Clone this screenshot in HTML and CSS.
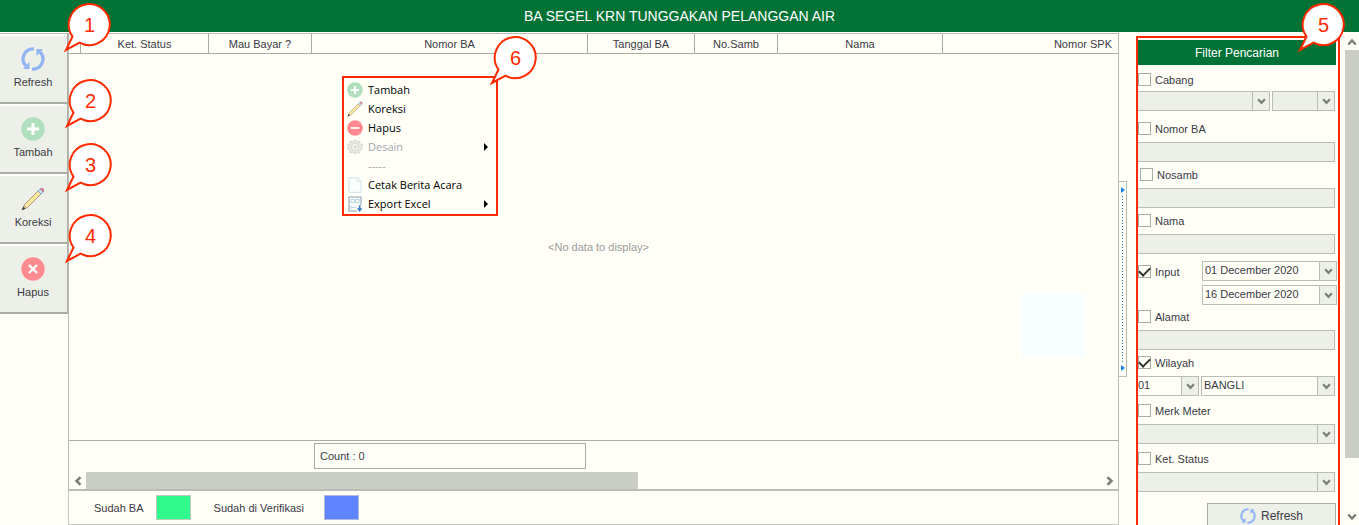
FILE: index.html
```html
<!DOCTYPE html>
<html lang="id">
<head>
<meta charset="utf-8">
<title>BA Segel KRN Tunggakan Pelanggan Air</title>
<link rel="stylesheet" href="styles.css">
</head>
<body>
<svg class="defs" aria-hidden="true">
  <symbol id="i-refresh" viewBox="0 0 24 24">
    <g fill="none" stroke="#93b4f3" stroke-width="3.2">
      <path d="M13 2A10 10 0 0 0 5 19"/>
      <path d="M11 22A10 10 0 0 0 19 5"/>
    </g>
    <path d="M2 22h6.500v-7z M22 2h-6.500v7z" fill="#93b4f3"/>
  </symbol>
  <symbol id="i-plus" viewBox="0 0 24 24">
    <circle cx="12" cy="12" r="11.700" fill="#afdfbd"/>
    <path d="M12 6v12M6 12h12" stroke="#fff" stroke-width="3"/>
  </symbol>
  <symbol id="i-minus" viewBox="0 0 24 24">
    <circle cx="12" cy="12" r="11.700" fill="#ff8a90"/>
    <path d="M5.500 12h13" stroke="#fff" stroke-width="2.600"/>
  </symbol>
  <symbol id="i-cross" viewBox="0 0 24 24">
    <circle cx="12" cy="12" r="11.700" fill="#ff8a90"/>
    <path d="M8 8l8 8M16 8l-8 8" stroke="#fff" stroke-width="2.400"/>
  </symbol>
  <symbol id="i-pencil" viewBox="0 0 24 24">
    <path d="M1 23l2.200-5L17 4l3 3L6 20.800z" fill="#ffe9a0" stroke="#8d8565" stroke-width=".8"/>
    <path d="M1 23l2.200-5L6 20.800z" fill="#d9b98a"/>
    <path d="M1 23l1.200-3.300 2.200 2.100z" fill="#333"/>
    <path d="M17 4l2.200-2.200 3 3L20 7z" fill="#cfe6f5" stroke="#7f9db5" stroke-width=".8"/>
    <path d="M19.200 1.800Q20.500.6 22.200 1.800q1.400 1.700.2 3.100z" fill="#e8798c" stroke="#a86a78" stroke-width=".6"/>
  </symbol>
  <symbol id="i-gear" viewBox="0 0 24 24">
    <path d="M12 1l2.500 3.500L19 3l.5 4.500L23.500 9l-2 3 2 3-4 1.500L19 21l-4.500-1.500L12 23l-2.500-3.500L5 21l-.5-4.500L.5 15l2-3-2-3 4-1.500L5 3l4.500 1.500z" fill="#e9ebe5" stroke="#cdd0c8" stroke-width="1.200"/>
    <circle cx="12" cy="12" r="5.500" fill="#f7f8f2" stroke="#cbcec6" stroke-width="1.200"/>
    <circle cx="12" cy="12" r="2.500" fill="#d9dbd4"/>
  </symbol>
  <symbol id="i-page" viewBox="0 0 24 24">
    <path d="M3 1h12.500L21 6.500V23H3z" fill="#fbfffc" stroke="#cfe2ea" stroke-width="1.500"/>
    <path d="M15.500 1v5.500H21" fill="none" stroke="#cfe2ea" stroke-width="1.500"/>
  </symbol>
  <symbol id="i-export" viewBox="0 0 24 24">
    <path d="M15 22.500H3V1.500h18V14" fill="none" stroke="#8aa0b4" stroke-width="1.600"/>
    <path d="M6 5h5v5H6zM13 5h5v5h-5zM6 17h8M6 14v6" fill="none" stroke="#b7d3df" stroke-width="1.500"/>
    <path d="M19 14v6" stroke="#3c78c8" stroke-width="2.600"/>
    <path d="M14.800 18.500h8.400L19 24z" fill="#3c78c8"/>
  </symbol>
  <symbol id="i-down" viewBox="0 0 8 8">
    <path d="M1 2l3 3.200L7 2" fill="none" stroke="#7b7f75" stroke-width="2"/>
  </symbol>
  <symbol id="i-callout" viewBox="0 0 50 50">
    <path d="M2 47L8.500 33.500A20.500 20.500 0 1 1 15.500 39.700z" fill="#fff" stroke="#ff2a00" stroke-width="2"/>
  </symbol>
</svg>

<div class="app">
  <header class="title-bar"><h1>BA SEGEL KRN TUNGGAKAN PELANGGAN AIR</h1></header>

  <div class="workspace">
    <nav class="toolbar" aria-label="Aksi">
      <button type="button"><svg><use href="#i-refresh"/></svg>Refresh</button>
      <button type="button"><svg><use href="#i-plus"/></svg>Tambah</button>
      <button type="button"><svg><use href="#i-pencil"/></svg>Koreksi</button>
      <button type="button"><svg><use href="#i-cross"/></svg>Hapus</button>
    </nav>

    <main class="content">
      <section class="grid">
        <table>
          <colgroup><col class="c-mark"><col class="c-status"><col class="c-bayar"><col class="c-nomor"><col class="c-tanggal"><col class="c-samb"><col class="c-nama"><col></colgroup>
          <thead>
            <tr><th></th><th>Ket. Status</th><th>Mau Bayar ?</th><th>Nomor BA</th><th>Tanggal BA</th><th>No.Samb</th><th>Nama</th><th class="last">Nomor SPK</th></tr>
          </thead>
        </table>
        <div class="grid-body"><p>&lt;No data to display&gt;</p></div>
        <div class="summary"><div class="count">Count : 0</div></div>
        <div class="scroll-x">
          <button type="button" class="sb left" aria-label="Geser kiri"><svg><use href="#i-down"/></svg></button>
          <div class="track"><div class="thumb"></div></div>
          <button type="button" class="sb right" aria-label="Geser kanan"><svg><use href="#i-down"/></svg></button>
        </div>
        <div class="ghost"></div>
      </section>
      <footer class="legend">
        <span>Sudah BA</span><i class="swatch green"></i>
        <span>Sudah di Verifikasi</span><i class="swatch blue"></i>
      </footer>
    </main>

    <div class="splitter"><i></i><b></b><i></i></div>

    <aside class="side">
      <form class="filter">
        <h2>Filter Pencarian</h2>

        <div class="field pair">
          <label class="check"><input type="checkbox">Cabang</label>
          <div class="row">
            <div class="combo grow off"><select aria-label="Kode cabang"><option></option></select><span><svg><use href="#i-down"/></svg></span></div>
            <div class="combo small off"><select aria-label="Nama cabang"><option></option></select><span><svg><use href="#i-down"/></svg></span></div>
          </div>
        </div>
        <div class="field roomy">
          <label class="check"><input type="checkbox">Nomor BA</label>
          <input type="text" class="text" aria-label="Nomor BA">
        </div>
        <div class="field">
          <label class="check inset"><input type="checkbox">Nosamb</label>
          <input type="text" class="text" aria-label="Nosamb">
        </div>
        <div class="field">
          <label class="check"><input type="checkbox">Nama</label>
          <input type="text" class="text" aria-label="Nama">
        </div>
        <div class="field dates">
          <label class="check"><input type="checkbox" checked>Input</label>
          <div class="date-list">
            <div class="combo"><select aria-label="Tanggal awal"><option>01 December 2020</option></select><span><svg><use href="#i-down"/></svg></span></div>
            <div class="combo"><select aria-label="Tanggal akhir"><option>16 December 2020</option></select><span><svg><use href="#i-down"/></svg></span></div>
          </div>
        </div>
        <div class="field tight">
          <label class="check"><input type="checkbox">Alamat</label>
          <input type="text" class="text" aria-label="Alamat">
        </div>
        <div class="field">
          <label class="check"><input type="checkbox" checked>Wilayah</label>
          <div class="row">
            <div class="combo code"><select aria-label="Kode wilayah"><option>01</option></select><span><svg><use href="#i-down"/></svg></span></div>
            <div class="combo grow"><select aria-label="Nama wilayah"><option>BANGLI</option></select><span><svg><use href="#i-down"/></svg></span></div>
          </div>
        </div>
        <div class="field roomy">
          <label class="check"><input type="checkbox">Merk Meter</label>
          <div class="combo off"><select aria-label="Merk Meter"><option></option></select><span><svg><use href="#i-down"/></svg></span></div>
        </div>
        <div class="field roomy">
          <label class="check"><input type="checkbox">Ket. Status</label>
          <div class="combo off"><select aria-label="Ket. Status"><option></option></select><span><svg><use href="#i-down"/></svg></span></div>
        </div>
        <button type="button" class="refresh"><svg><use href="#i-refresh"/></svg>Refresh</button>
      </form>
      <div class="scroll-y">
        <button type="button" class="sb up" aria-label="Gulir atas"><svg><use href="#i-down"/></svg></button>
        <div class="track"><div class="thumb"></div></div>
        <button type="button" class="sb down" aria-label="Gulir bawah"><svg><use href="#i-down"/></svg></button>
      </div>
    </aside>
  </div>

  <div class="menu" role="menu">
    <button type="button" role="menuitem"><svg><use href="#i-plus"/></svg>Tambah</button>
    <button type="button" role="menuitem"><svg><use href="#i-pencil"/></svg>Koreksi</button>
    <button type="button" role="menuitem"><svg><use href="#i-minus"/></svg>Hapus</button>
    <button type="button" role="menuitem" class="sub" disabled><svg><use href="#i-gear"/></svg>Desain</button>
    <button type="button" role="menuitem" disabled><svg></svg>-----</button>
    <button type="button" role="menuitem"><svg><use href="#i-page"/></svg>Cetak Berita Acara</button>
    <button type="button" role="menuitem" class="sub"><svg><use href="#i-export"/></svg>Export Excel</button>
  </div>

  <div class="callout n1"><svg><use href="#i-callout"/></svg><span>1</span></div>
  <div class="callout n2"><svg><use href="#i-callout"/></svg><span>2</span></div>
  <div class="callout n3"><svg><use href="#i-callout"/></svg><span>3</span></div>
  <div class="callout n4"><svg><use href="#i-callout"/></svg><span>4</span></div>
  <div class="callout n5"><svg><use href="#i-callout"/></svg><span>5</span></div>
  <div class="callout n6"><svg><use href="#i-callout"/></svg><span>6</span></div>
</div>
</body>
</html>
```
FILE: styles.css
```css
:root {
  --paper: #fffff8;
  --green: #007236;
  --panel: #edf0e8;
  --line: #aaaea2;
  --line-soft: #b9bdb3;
  --thumb: #cbcec5;
  --ink: #3a3a44;
  --red: #ff2a00;
}
* { box-sizing: border-box; }
body {
  margin: 0;
  background: var(--paper);
  color: var(--ink);
  font: 11px/14px "Liberation Sans", Arial, sans-serif;
}
button, input, select { font: inherit; color: inherit; margin: 0; border-radius: 0; }
h1, h2, p { margin: 0; font-weight: normal; }
.defs { position: absolute; width: 0; height: 0; }

.app { position: relative; display: flex; flex-direction: column; height: 100vh; overflow: hidden; }
.title-bar { flex: none; height: 32px; background: var(--green); color: #fff; text-align: center; }
.title-bar h1 { font-size: 14px; line-height: 32px; }
.workspace { flex: 1; display: flex; min-height: 0; padding-top: 1px; }

.toolbar { width: 68px; border-top: 1px solid var(--line-soft); }
.toolbar button {
  display: flex; flex-direction: column; align-items: center; justify-content: center; gap: 4px;
  width: 100%; height: 70px; padding: 0 1px 0 0;
  border: solid var(--line); border-width: 0 1px 2px 0;
  box-shadow: inset 0 2px #fff;
  background: var(--panel);
}
.toolbar svg { width: 24px; height: 24px; }

.content { flex: 1; min-width: 0; display: flex; flex-direction: column; }
.grid {
  position: relative; flex: 1; display: flex; flex-direction: column;
  border: 1px solid var(--line-soft); border-bottom-width: 2px;
}
table { width: 100%; table-layout: fixed; border-collapse: separate; border-spacing: 0; }
th {
  height: 20px; padding: 1px 0 0; font-weight: normal; text-align: center; line-height: 18px;
  border-right: 1px solid var(--line); border-bottom: 1px solid var(--line);
}
th.last { text-align: right; padding-right: 6px; border-right: 0; }
.c-mark { width: 12px; }
.c-status { width: 128px; }
.c-bayar { width: 103px; }
.c-nomor { width: 276px; }
.c-tanggal { width: 107px; }
.c-samb { width: 83px; }
.c-nama { width: 165px; }
.grid-body { flex: 1; display: grid; place-items: center; padding-left: 10px; color: #9a9a9a; }
.ghost { position: absolute; right: 32px; top: 260px; width: 64px; height: 64px; background: #f8ffff; }
.summary { height: 32px; padding: 2px 0 3px 245px; border-top: 1px solid var(--line); }
.count { width: 272px; height: 26px; padding-left: 5px; line-height: 24px; border: 1px solid var(--line); }

.sb { display: grid; place-items: center; flex: none; padding: 0; border: 0; background: none; }
.sb svg { width: 10px; height: 10px; }
.left svg { rotate: 90deg; }
.right svg { rotate: -90deg; }
.up svg { rotate: 180deg; }
.track { flex: 1; }
.thumb { background: var(--thumb); }
.scroll-x { display: flex; height: 17px; }
.scroll-x .sb { width: 17px; }
.scroll-x .thumb { width: 54.4%; height: 100%; }

.legend {
  display: flex; align-items: center; height: 34px; padding-left: 25px;
  border: 1px solid #c8cbc2; border-top: 0;
}
.swatch { width: 35px; height: 25px; border: 1px solid #b9cdb9; }
.green { margin: 0 23px 0 12px; background: #30fa8c; }
.blue { margin-left: 20px; background: #6084ff; border-color: #b0b8e0; }

.splitter {
  align-self: flex-start; display: flex; flex-direction: column; align-items: center;
  width: 8px; height: 196px; margin: 148px 9px 0 0; padding: 5px 0;
  border: 1px solid var(--line-soft); border-left: 0;
}
.splitter i { border: solid transparent; border-width: 3px 0 3px 4px; border-left-color: #1583e8; }
.splitter b {
  flex: 1; width: 1px; margin: 3px 0;
  background: repeating-linear-gradient(#1f7fc8 0 1px, transparent 1px 3px);
}

.side { display: flex; gap: 5px; }
.filter { width: 204px; margin-top: 3px; padding: 2px 2px 0 0; border: 2px solid var(--red); border-bottom: 0; }
.filter h2 {
  height: 25px; margin-bottom: 8px; background: var(--green); color: #fff;
  font-size: 12px; line-height: 26px; text-align: center;
}
.field { display: flex; flex-direction: column; gap: 7px; margin: 6px 1px 0 0; }
.pair { gap: 5px; margin-bottom: 11px; }
.roomy { margin-top: 8px; }
.pair + .roomy { margin-top: 0; }
h2 + .field { margin-top: 0; }
.check { display: flex; align-items: center; gap: 4px; height: 13px; line-height: 12px; }
.check input {
  appearance: none; display: grid; place-items: center;
  width: 13px; height: 13px; background: var(--paper); border: 1px solid var(--line);
}
.check input:checked::before {
  content: ""; width: 9px; height: 5px; margin-bottom: 2px;
  border: solid #2f312c; border-width: 0 0 2px 2px; rotate: -45deg;
}
.inset { padding-left: 2px; }
.text { width: 100%; height: 20px; border: 1px solid var(--line-soft); border-left: 0; background: var(--panel); }
.row { display: flex; gap: 2px; }
.combo { display: grid; grid-template-columns: 1fr 18px; height: 20px; }
.combo select {
  grid-area: 1 / 1 / 2 / 3; appearance: none; width: 100%; padding: 0 18px 2px 2px;
  border: 1px solid var(--line-soft); background: var(--paper);
}
.combo span {
  grid-area: 1 / 2; display: grid; place-items: center; pointer-events: none;
  border: 1px solid var(--line-soft); background: var(--panel);
}
.combo svg { width: 9px; height: 9px; }
.combo.off select { background: var(--panel); }
.grow { flex: 1; }
.small { width: 63px; }
.code { width: 61px; }
.code select, .row .off.grow select, .field > .off select { padding-left: 0; border-left: 0; }
.dates { flex-direction: row; justify-content: space-between; margin: 7px 0 0; }
.dates .check { margin-top: 4px; }
.date-list { display: grid; gap: 4px; width: 135px; margin-right: -1px; }
.tight { margin-top: 5px; }
.refresh {
  display: flex; align-items: center; justify-content: center; gap: 5px;
  width: 129px; height: 25px; margin: 11px 0 0 auto; padding: 0;
  border: 1px solid var(--line); background: var(--panel); font-size: 12px;
}
.refresh svg { width: 16px; height: 16px; }
.scroll-y { display: flex; flex-direction: column; width: 14px; }
.scroll-y .sb { height: 17px; }
.scroll-y .thumb { height: 89%; }

.menu {
  position: absolute; left: 342px; top: 76px; width: 156px; padding: 2px 0 1px;
  border: 2px solid var(--red); background: var(--paper);
  font: 11px/19px "Open Sans", "Noto Sans", sans-serif; color: #000;
}
.menu button {
  display: flex; align-items: center; gap: 5px; width: 100%; height: 19px;
  padding: 0 8px 0 3px; border: 0; background: none;
}
.menu button:disabled { color: #a5a5ad; }
.menu svg { width: 16px; height: 16px; }
.sub::after { content: ""; margin-left: auto; border: solid transparent; border-width: 4px 0 4px 4px; border-left-color: #000; }

.callout { position: absolute; width: 50px; height: 50px; }
.callout svg { position: absolute; inset: 0; width: 50px; height: 50px; }
.callout span {
  position: relative; display: block; width: 51px; color: var(--red);
  font-size: 20px; line-height: 44px; text-align: center;
}
.n1 { left: 64px; top: 3px; }
.n2 { left: 65px; top: 79px; }
.n3 { left: 65px; top: 143px; }
.n4 { left: 65px; top: 214px; }
.n5 { right: 11px; top: 3px; }
.n6 { left: 490px; top: 36px; }
```
